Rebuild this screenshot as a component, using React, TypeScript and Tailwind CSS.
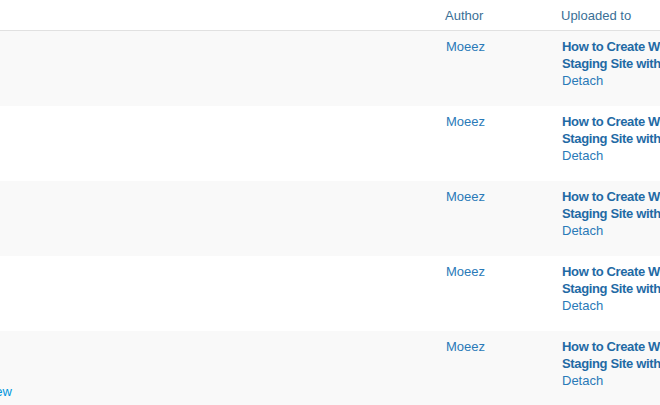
import React from 'react';

const rows = [0, 1, 2, 3, 4];

export default function App() {
  return (
    <div className="w-[660px] h-[405px] overflow-hidden bg-white" style={{ fontFamily: '"Liberation Sans", Arial, sans-serif' }}>
      <div className="w-[820px] text-[13px] leading-[17px]">
        <div className="flex h-[31px] items-center border-b border-[#e1e1e1] bg-white">
          <div className="w-[437px]" />
          <div className="w-[116px] pl-[8px] text-[#3a6f96]">Author</div>
          <div className="flex-1 pl-[8px] text-[#3a6f96]">Uploaded to</div>
        </div>
        {rows.map((i) => (
          <div key={i} className={`flex h-[75px] pt-[7px] ${i % 2 === 0 ? 'bg-[#f9f9f9]' : 'bg-white'}`}>
            <div className="w-[437px] relative">
              {i === 4 && (
                <span className="absolute left-[-16px] top-[45px] text-[#0096dd]">View</span>
              )}
            </div>
            <div className="w-[116px] pl-[9px] text-[#2a7ab8]">Moeez</div>
            <div className="w-[240px] pl-[9px] whitespace-nowrap">
              <div className="font-semibold tracking-[-0.35px] text-[#1f6aa5]">How to Create WordPress</div>
              <div className="font-semibold tracking-[-0.35px] text-[#1f6aa5]">Staging Site with WP Staging</div>
              <div className="text-[#2a7ab8]">Detach</div>
            </div>
          </div>
        ))}
      </div>
    </div>
  );
}
